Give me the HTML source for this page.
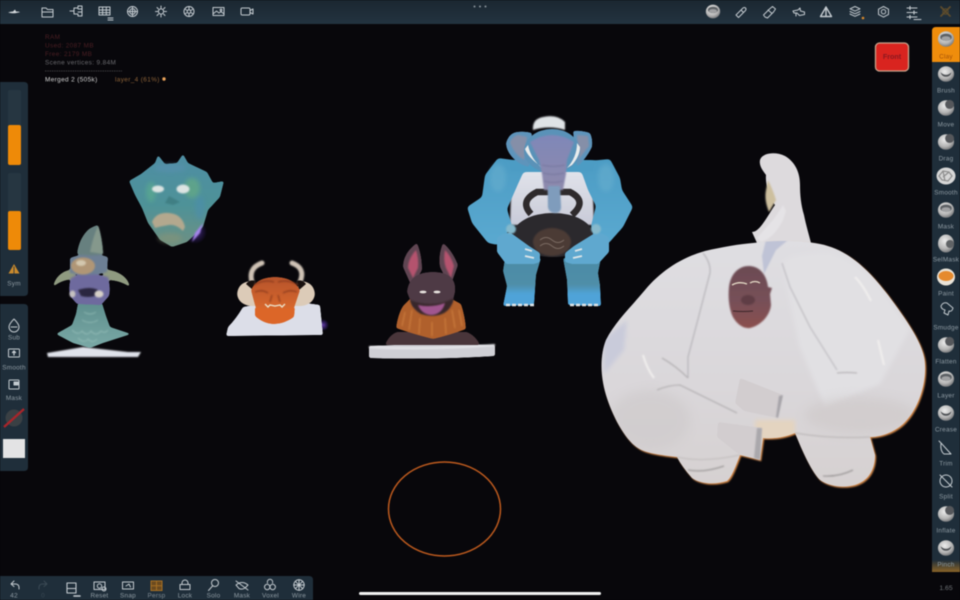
<!DOCTYPE html>
<html><head><meta charset="utf-8"><style>
html,body{margin:0;padding:0;background:#08070b;width:960px;height:600px;overflow:hidden}
svg{display:block;filter:blur(.4px)}
text{font-family:"Liberation Sans",sans-serif}
.l{font-size:6.4px;fill:#8f9ba3;text-anchor:middle;letter-spacing:.25px}
.i{fill:none;stroke:#c3cacf;stroke-width:1;stroke-linejoin:round;stroke-linecap:round}
</style></head><body>
<svg width="960" height="600" viewBox="0 0 960 600" xmlns="http://www.w3.org/2000/svg">
<defs>
<filter id="r1" filterUnits="userSpaceOnUse" x="0" y="0" width="960" height="600" color-interpolation-filters="sRGB"><feGaussianBlur stdDeviation="1"/><feComponentTransfer><feFuncA type="linear" slope="9" intercept="-4"/></feComponentTransfer></filter>
<filter id="r2" filterUnits="userSpaceOnUse" x="0" y="0" width="960" height="600" color-interpolation-filters="sRGB"><feGaussianBlur stdDeviation="1.800"/><feComponentTransfer><feFuncA type="linear" slope="9" intercept="-4"/></feComponentTransfer></filter>
<filter id="s1" filterUnits="userSpaceOnUse" x="0" y="0" width="960" height="600"><feGaussianBlur stdDeviation=".7"/></filter>
<filter id="s2" filterUnits="userSpaceOnUse" x="0" y="0" width="960" height="600"><feGaussianBlur stdDeviation="2"/></filter>
<filter id="s4" filterUnits="userSpaceOnUse" x="0" y="0" width="960" height="600"><feGaussianBlur stdDeviation="5"/></filter>
<linearGradient id="top" x1="0" y1="0" x2="0" y2="1"><stop offset="0" stop-color="#1b2731"/><stop offset="1" stop-color="#233340"/></linearGradient>
<linearGradient id="band" x1="0" y1="0" x2="0" y2="1"><stop offset="0" stop-color="#1f2e3a"/><stop offset="1" stop-color="#8a6428"/></linearGradient>
<radialGradient id="sph" cx=".42" cy=".35" r=".75"><stop offset="0" stop-color="#ececec"/><stop offset=".6" stop-color="#b4b4b4"/><stop offset="1" stop-color="#5d5f62"/></radialGradient>
<linearGradient id="body" x1="0" y1="0" x2="0" y2="1"><stop offset="0" stop-color="#dfdee2"/><stop offset=".6" stop-color="#dad7da"/><stop offset="1" stop-color="#d6d1d1"/></linearGradient>
<linearGradient id="blue" x1="0" y1="0" x2="0" y2="1"><stop offset="0" stop-color="#4c9cc4"/><stop offset="1" stop-color="#5aa9d0"/></linearGradient>
<linearGradient id="leg" x1="0" y1="0" x2="0" y2="1"><stop offset="0" stop-color="#4b8ba6"/><stop offset=".55" stop-color="#4f8ea8"/><stop offset=".75" stop-color="#4fa3d8"/><stop offset="1" stop-color="#4fa3d8"/></linearGradient>
<linearGradient id="face" x1="0" y1="0" x2="0" y2="1"><stop offset="0" stop-color="#4f8ea4"/><stop offset=".55" stop-color="#4e9298"/><stop offset="1" stop-color="#6f9082"/></linearGradient>
<linearGradient id="vest" x1="0" y1="0" x2="0" y2="1"><stop offset="0" stop-color="#e4e6ec"/><stop offset="1" stop-color="#c8cad8"/></linearGradient>
<linearGradient id="ape" x1="0" y1="0" x2="0" y2="1"><stop offset="0" stop-color="#6b4a52"/><stop offset=".55" stop-color="#765058"/><stop offset="1" stop-color="#8a504d"/></linearGradient>
<linearGradient id="coll" x1="0" y1="0" x2="0" y2="1"><stop offset="0" stop-color="#5f8f8e"/><stop offset="1" stop-color="#7aa9a6"/></linearGradient>
<linearGradient id="dev" x1="0" y1="0" x2="0" y2="1"><stop offset="0" stop-color="#b6542c"/><stop offset="1" stop-color="#e06c2c"/></linearGradient>
<linearGradient id="trunk" x1="0" y1="0" x2="0" y2="1"><stop offset="0" stop-color="#7f87b8"/><stop offset=".7" stop-color="#8d89ac"/><stop offset="1" stop-color="#7f9cbc"/></linearGradient>
<radialGradient id="glow"><stop offset="0" stop-color="#9a5cff" stop-opacity=".9"/><stop offset="1" stop-color="#6a3cff" stop-opacity="0"/></radialGradient>
<symbol id="s" viewBox="0 0 20 20" overflow="visible"><ellipse cx="10" cy="10" rx="9" ry="8.600" fill="url(#sph)"/><ellipse cx="10" cy="8" rx="6.400" ry="4" fill="#5c6064"/><ellipse cx="10" cy="9.400" rx="5" ry="2.400" fill="#a0a1a3"/></symbol>
<symbol id="d" viewBox="0 0 20 20" overflow="visible"><ellipse cx="10" cy="10" rx="9" ry="8.600" fill="url(#sph)"/><circle cx="14" cy="6" r="5" fill="#55575b"/></symbol>
<symbol id="c" viewBox="0 0 20 20" overflow="visible"><ellipse cx="10" cy="10" rx="9" ry="8.600" fill="url(#sph)"/><path d="M4 8q6 6 12 0q-1 5-6 5t-6-5z" fill="#4d5054"/></symbol>
<path id="bp" d="M753 243C775 240 800 240 820 244C850 250 870 272 888 295C905 318 925 345 925 365C926 385 918 410 903 424C893 433 880 437 870 437L875 455C875 470 868 481 855 485C845 488 830 487 820 480C810 470 800 445 795 433C785 437 775 439 763 438L760 460L740 455C736 465 732 477 727 481C715 485 700 484 692 478C685 470 680 463 677 457C660 455 645 453 638 448C625 440 612 415 606 395C600 375 600 355 606 340C615 322 630 308 645 290C660 272 680 258 705 251C722 247 740 244 753 243Z"/>
<clipPath id="bc"><use href="#bp"/></clipPath>
</defs>

<rect width="960" height="600" fill="#08070b"/>

<!-- top bar -->
<rect width="960" height="24" fill="url(#top)"/>
<path d="M8 12.500q3-1 5-1l2-2 1 2q3 0 4 .7-3 .6-5 1t-7-.7z" fill="#d5dade"/>
<g class="i">
<path d="M42 17V8h4l1.500 1.500H53V17zM42 12h11"/>
<path d="M70 11h4m0-3v6m0-6h4v-2h4v10h-4v-2h-4M78 9h4M78 12h4"/>
<path d="M99 7h11v8H99zM99 10h11M99 12.600h11M102.600 7v8M106.300 7v8M108 18h5M108 20h5"/>
<circle cx="132.500" cy="11.500" r="5"/><circle cx="132.500" cy="11.500" r="2.800"/><path d="M127.500 11.500h10M132.500 6.500v10"/>
<circle cx="161" cy="11.500" r="2.600"/><path d="M161 6v2M161 15v2M155.500 11.500h2M164.500 11.500h2M157 7.500l1.400 1.400M163.600 14.100l1.400 1.400M157 15.500l1.400-1.400M163.600 8.900l1.400-1.400"/>
<circle cx="189" cy="11.500" r="5"/><circle cx="189" cy="11.500" r="1.800"/><path d="M189 6.500v3M189 13.500v3M184.700 9l2.700 1.500M190.600 12.500l2.700 1.500M184.700 14l2.700-1.500M190.600 10.500l2.700-1.500"/>
<path d="M213 7.500h11v8h-11zM213 14l3.500-3 2.500 2 2-1.500 3 2.500"/><circle cx="221" cy="10" r=".9"/>
<rect x="241" y="8" width="9" height="7" rx="1.200"/><path d="M250 10.500l3-1.500v5l-3-1.500"/>
</g>
<circle cx="474.500" cy="6.500" r="1" fill="#8a949b"/><circle cx="480" cy="6.500" r="1" fill="#8a949b"/><circle cx="485.500" cy="6.500" r="1" fill="#8a949b"/>
<use href="#s" x="704" y="3.500" width="18" height="16"/>
<g class="i">
<path d="M737 16l-1-1 7-7q1.500-1 2.500 0t0 2.500l-7 7zM741 10l2.500 2.500"/>
<path d="M765 17l-1.500-2 6-6 3-2.500 3 2.500-2 3-6 6zM768 10l3.500 3"/>
<path d="M793 11l5-1 2-2 .5 3 4 1v2.500l-5 1-2.500-2.500h-3zM796 13v3"/>
<path d="M826 7l5.500 9.500h-11zM826 7v9.500" stroke-width="1.400"/>
<path d="M855 6.500l5 2.300-5 2.300-5-2.300zM850 11.500l5 2.300 5-2.300M850 14l5 2.300 5-2.300"/>
<path d="M883.500 6.500l5 2.700v5.200l-5 2.700-5-2.700V9.200z"/><circle cx="883.500" cy="11.700" r="2.200"/>
<path d="M907 8h10M907 12.500h10M907 17h10M914 19.500h7" /><path d="M910 6.500v3M914 11v3M910 15.500v3" stroke-width="1.200"/>
</g>
<circle cx="863" cy="18" r="1.300" fill="#d98a2c"/>
<g fill="none" stroke="#5d4c2c" stroke-width="1.800" stroke-linecap="round"><path d="M941 7l9 9M950 7l-9 9"/><circle cx="945.500" cy="11.500" r="2.800" stroke-width="1"/></g>

<!-- stats -->
<g font-size="6.400" letter-spacing=".38">
<text x="45" y="39" fill="#4b1f24">RAM</text>
<text x="45" y="47.500" fill="#4b1f24">Used: 2087 MB</text>
<text x="45" y="56" fill="#4b1f24">Free: 2179 MB</text>
<text x="45" y="64.500" fill="#6b6b6f">Scene vertices: 9.84M</text>
<path d="M45 71h77" stroke="#4d4d50" stroke-width=".7" stroke-dasharray="1.500 .8"/>
<text x="45" y="81.500" fill="#d6d6d6">Merged 2 (505k)</text>
<text x="115" y="81.500" fill="#8c6238">layer_4 (61%)</text>
</g>
<circle cx="164" cy="79" r="1.700" fill="#e9a25a"/>

<!-- Front button -->
<rect x="875.500" y="43" width="33" height="28" rx="4" fill="#d9241f" stroke="#c9a48c" stroke-width="1.300"/>
<text x="892" y="59" font-size="7.200" font-weight="bold" fill="#8b1820" text-anchor="middle">Front</text>

<!-- left panel 1 -->
<path d="M0 82h24q4 0 4 4v206q0 4-4 4H0z" fill="#1f2e3a"/>
<rect x="8" y="90" width="13" height="75" rx="2" fill="#263641"/>
<rect x="8" y="125" width="13" height="40" rx="2" fill="#ee8a08"/>
<rect x="8" y="173" width="13" height="77" rx="2" fill="#263641"/>
<rect x="8" y="211" width="13" height="39" rx="2" fill="#ee8a08"/>
<path d="M14 264l5.500 9.500h-11z" fill="#c98a2d"/><path d="M14 266.500v7" stroke="#1f2e3a" stroke-width=".8"/>
<text class="l" x="14" y="285.500">Sym</text>

<!-- left panel 2 -->
<path d="M0 304h24q4 0 4 4v159q0 4-4 4H0z" fill="#1f2e3a"/>
<g class="i">
<path d="M14 319q5 5 5 8a5 5 0 0 1-10 0q0-3 5-8zM11 327h6"/>
<rect x="8.500" y="349" width="11" height="8" rx=".8"/><path d="M14 355v-4M12.500 352.500l1.500-1.500 1.500 1.500" stroke-width="1.300"/>
<rect x="9" y="380" width="10" height="9" rx=".8"/><path d="M14 382h4v3h-4z" fill="#c3cacf"/>
</g>
<text class="l" x="14" y="339.500">Sub</text>
<text class="l" x="14" y="369.500">Smooth</text>
<text class="l" x="14" y="400">Mask</text>
<circle cx="14" cy="418" r="8.500" fill="#3a4044"/>
<path d="M4 427L24 409" stroke="#a8252a" stroke-width="2.300"/>
<rect x="3" y="439" width="22" height="19" fill="#e3e3e4"/>

<!-- bottom bar -->
<path d="M0 576h309q4 0 4 4v20H0z" fill="#1f2e3a"/>
<g class="i">
<path d="M11 584l3-3m-3 3l3 2.500m-3-2.500h5q3 .5 3 3.500v1.500"/>
<path d="M47 584l-3-3m3 3l-3 2.500m3-2.500h-5q-3 .5-3 3.500v1.500" stroke="#3a4954"/>
<path d="M67 583h9v10h-9zM67 588.500h9" stroke-width="1.100"/><path d="M74 596h6" stroke-width="1.600"/>
<path d="M94 582h11v7.500H94z"/><circle cx="99.500" cy="586" r="2.200"/><circle cx="104" cy="589" r="2"/>
<path d="M122.500 582h11v7h-11zM126 586l3-2 1.500 3"/>
<path d="M180 584.500h10v5h-10zM182 584.500v-1.500a3 3 0 0 1 6 0v1.500"/>
<circle cx="215" cy="583" r="3.500"/><path d="M212.500 586l-4 4.500"/>
<path d="M236 585q6-5 12 0l-3 3q-3 2-6 .5zM236 581l12 9"/>
<path d="M267.500 583a2.700 2.700 0 1 1 5 0M264.500 587a2.700 2.700 0 1 1 2.700 2.700 2.700 2.700 0 0 1-2.700-2.700zM270 587a2.700 2.700 0 1 1 2.700 2.700 2.700 2.700 0 0 1-2.700-2.700z"/>
<circle cx="299" cy="585" r="5.200"/><path d="M293.800 585h10.400M299 579.800v10.400M295.300 581.300l7.400 7.400M302.700 581.300l-7.400 7.400"/>
</g>
<path d="M151 581h11v9.500h-11zM156.500 581v9.500M151 585.800h11" fill="#6b4a1f" stroke="#a56f24" stroke-width="1"/>
<text class="l" x="14" y="597.500" style="font-size:6.600px">42</text>
<text class="l" x="43" y="597.500" style="fill:#3a4954">0</text>
<text class="l" x="99.500" y="597.500">Reset</text>
<text class="l" x="128" y="597.500">Snap</text>
<text class="l" x="156.500" y="597.500" style="fill:#7c8890">Persp</text>
<text class="l" x="185" y="597.500">Lock</text>
<text class="l" x="213.500" y="597.500">Solo</text>
<text class="l" x="242" y="597.500">Mask</text>
<text class="l" x="270.500" y="597.500">Voxel</text>
<text class="l" x="299" y="597.500">Wire</text>
<rect x="359" y="592" width="242" height="3" rx="1.500" fill="#f2f2f2"/>
<text x="946" y="590" font-size="6.800" fill="#6e7276" text-anchor="middle">1.65</text>

<!-- right panel -->
<path d="M936 27H960V572H932V31q0-4 4-4z" fill="#1f2e3a"/>
<rect x="932" y="560" width="28" height="12" fill="url(#band)"/>
<path d="M936 27H960V62H932V31q0-4 4-4z" fill="#ef8d0c"/>
<use href="#s" x="937" y="30" width="18" height="18"/>
<use href="#c" x="937" y="65" width="18" height="18"/>
<use href="#d" x="937" y="99" width="18" height="18"/>
<use href="#d" x="937" y="133" width="18" height="18"/>
<ellipse cx="946" cy="176" rx="9.500" ry="8.500" fill="#d6d6d6"/><path d="M939 176l4-5 6 1 3 4-4 5-6-1zM943 171l2 10M949 172l-6 5" fill="none" stroke="#8d8d8d" stroke-width="1.200"/>
<use href="#s" x="937" y="201" width="18" height="18"/>
<ellipse cx="946" cy="243.500" rx="8" ry="9" fill="url(#sph)"/><circle cx="950" cy="244" r="4" fill="#606366"/>
<ellipse cx="946" cy="277" rx="9" ry="8.500" fill="#e9e3d8"/><ellipse cx="946" cy="276" rx="7.500" ry="5" fill="#e58a2e"/>
<path class="i" d="M941 306q2-4 6-3l6 5q-1 4-4 3l-1 4-4-2 1-3q-4-1-4-4z"/>
<use href="#d" x="937" y="336" width="18" height="18"/>
<use href="#s" x="937" y="370" width="18" height="18"/>
<use href="#c" x="937" y="404" width="18" height="18"/>
<path class="i" d="M941 443l10 11h-7q-4-3-3-11zM939 441l3 3"/>
<g class="i"><circle cx="946" cy="481" r="6"/><path d="M940 475l12 12"/></g>
<use href="#d" x="937" y="505" width="18" height="18"/>
<use href="#c" x="937" y="539" width="18" height="18"/>
<text class="l" x="946" y="58.500" style="fill:#a5520a">Clay</text>
<text class="l" x="946" y="92.500">Brush</text>
<text class="l" x="946" y="126.500">Move</text>
<text class="l" x="946" y="160.500">Drag</text>
<text class="l" x="946" y="194.500">Smooth</text>
<text class="l" x="946" y="228.500">Mask</text>
<text class="l" x="946" y="261.500">SelMask</text>
<text class="l" x="946" y="295.500">Paint</text>
<text class="l" x="946" y="329.500">Smudge</text>
<text class="l" x="946" y="363.500">Flatten</text>
<text class="l" x="946" y="397.500">Layer</text>
<text class="l" x="946" y="431.500">Crease</text>
<text class="l" x="946" y="465.500">Trim</text>
<text class="l" x="946" y="498.500">Split</text>
<text class="l" x="946" y="532.500">Inflate</text>
<text class="l" x="946" y="566.500">Pinch</text>

<!-- orange ring -->
<ellipse cx="444.500" cy="509" rx="56" ry="47" fill="none" stroke="#bd5a1e" stroke-width="1.500"/>

<!-- gargoyle -->
<path d="M47 353l36-6 45 5 13 0-3 5H48z" fill="#dfe2ea" filter="url(#s1)"/>
<g filter="url(#r1)">
<path d="M78 303h24l4 13 4 11 21 7-28 9-13 5-17-5-17-9 16-9 4-11z" fill="url(#coll)"/>
</g>
<g filter="url(#s1)" fill="none" stroke="#9cc4bd" stroke-width="1" opacity=".7">
<path d="M72 330q6 6 10 1 5 6 9 0 5 6 10 0 4 3 7-1M78 338q6 6 10 1 5 5 9 0M84 312q6 4 12 0M82 320q8 5 16 0"/>
</g>
<g filter="url(#r1)">
<path d="M53 287q3-15 20-18l3 10q-14 0-23 8z" fill="#8f9a80"/>
<path d="M130 287q-3-15-26-18l-1 11q15-1 27 7z" fill="#8f9a80"/>
<path d="M71 278q12-7 37-1 3 12 1 19l-8 9-24-1-7-8q-2-9 1-18z" fill="#6e6a9e"/>
<path d="M70 258q18-7 38-1l-1 15q-18 5-37 1z" fill="#6d7f94"/>
<path d="M77 254q2-16 12-25 5-3 9-4 4 12 5 29-12 3-26 0z" fill="#67807f"/>
</g>
<path d="M90 252q3-15 8-26 4 12 5 28z" fill="#85988c" filter="url(#s1)"/>
<path d="M78 290q12-4 20 0l-3 6q-7 2-14 0z" fill="#2a2840" filter="url(#s1)"/>
<ellipse cx="72.500" cy="294" rx="3" ry="3.500" fill="#c5c1c0" filter="url(#s1)"/><ellipse cx="99" cy="294" rx="4.500" ry="3.500" fill="#d6d0c8" filter="url(#s1)"/>
<ellipse cx="83" cy="266" rx="12" ry="8.500" fill="#b09676" filter="url(#s1)"/>
<ellipse cx="81" cy="263" rx="5" ry="3" fill="#d3c7ae" filter="url(#s1)"/>

<!-- blue face -->
<circle cx="195" cy="232" r="12" fill="url(#glow)" opacity=".55"/>
<path d="M129 181l12-7 14-11 3-8 7 9 12-1 6-9 5 9 19 9 6 11 11-2-4 16-12 13-5 17-16 15-15 5-12-7-12-17-6-15-7-13z" fill="url(#face)" filter="url(#r1)"/>
<g filter="url(#s2)" opacity=".5">
<ellipse cx="151" cy="192" rx="5" ry="10" fill="#5fb48a"/><ellipse cx="192" cy="188" rx="8" ry="10" fill="#6eb57a"/>
<ellipse cx="170" cy="168" rx="16" ry="4" fill="#5c8fb3"/>
<ellipse cx="200" cy="208" rx="5" ry="12" fill="#4b8cb0"/>
<ellipse cx="170" cy="238" rx="12" ry="5" fill="#8a9476"/>
</g>
<ellipse cx="158" cy="189" rx="6" ry="3.500" fill="#dce4e2" filter="url(#s1)"/><ellipse cx="183" cy="189" rx="6.500" ry="4.500" fill="#dce4e2" filter="url(#s1)"/>
<path d="M152 222q4-10 17-9t16 14l-2 4q-7-7-14-6t-14 3z" fill="#b3a88e" filter="url(#s1)"/>
<path d="M169 196l-4 7 8 2 7-3z" fill="#3f7f84" filter="url(#s1)"/>
<path d="M195 233l8-10-3 10-8 9z" fill="#a384ea" filter="url(#s1)"/>

<!-- orange devil -->
<circle cx="323" cy="325" r="6" fill="url(#glow)" opacity=".7"/>
<path d="M243 307q40-8 77-2l3 30-97 1 2-9q8-8 15-20z" fill="#dcdee8" filter="url(#r1)"/>
<g filter="url(#r2)">
<path d="M237 294q1-12 14-13l14 25-15 0q-12-2-13-12z" fill="#dccbb8"/>
<path d="M315 294q-1-12-14-13l-14 25 15 0q12-2 13-12z" fill="#dccbb8"/>
</g>
<g fill="none" stroke="#cfc3b6" stroke-linecap="round" filter="url(#s1)">
<path d="M262 263Q248 268 252 282" stroke-width="5"/>
<path d="M292 263Q306 268 300 282" stroke-width="5"/>
</g>
<path d="M246 284q4-5 9-3l-2 9zM306 284q-4-5-9-3l2 9z" fill="#18100e"/>
<path d="M251 290q6-13 24-13t25 13l-5 15-4 12-32 0-4-12z" fill="url(#dev)" filter="url(#r1)"/>
<path d="M255 307q20 4 40 0l-1 10q-10 7-20 7t-19-8z" fill="#dc6628" filter="url(#r1)"/>
<path d="M265 304l3 3 2-2 5 1 5-1 2 2 3-3" stroke="#eadfc8" stroke-width="1.400" fill="none"/>
<g filter="url(#s1)" fill="none" stroke="#8c3a1c" stroke-width="1.200"><path d="M255 292q7-3 13 1M283 293q7-4 14-1M254 285q10-6 20-3M278 282q10-3 20 3M272 295l-2 7M278 295l2 7"/></g>

<!-- rabbit -->
<path d="M369 346q62-3 126-1v11q-60 4-126 2z" fill="#cfcfd5" filter="url(#r1)"/>
<path d="M369 347q62 3 126-2" stroke="#e6e6ea" stroke-width="2" fill="none" filter="url(#s1)"/>
<path d="M385 345q4-10 12-13h70q9 4 13 13z" fill="#49353a" filter="url(#r1)"/>
<g filter="url(#r1)">
<path d="M417 243q-14 10-14 24l9 20 10-17q0-15-5-27z" fill="#5f4552"/>
<path d="M443 243q-5 12-3 24l10 20 8-22q-6-15-15-22z" fill="#5f4552"/>
</g>
<path d="M416 250q-8 9-8 18l5 10 5-10q1-9-2-18z" fill="#b4526e" filter="url(#s1)"/>
<path d="M445 250q-2 10 1 18l5 10 3-12q-3-10-9-16z" fill="#b4526e" filter="url(#s1)"/>
<path d="M396 328q2-14 7-22l9-9h36l13 7q4 12 5 25-16 6-33 10-20-5-37-11z" fill="#b0602c" filter="url(#r1)"/>
<g filter="url(#s1)" stroke="#d0803f" stroke-width="1" fill="none"><path d="M405 312l-3 14M412 310l-3 20M420 318l-1 16M445 318l1 16M452 310l3 18M459 310l3 16M432 322v14"/></g>
<path d="M407 292q2-20 26-20t22 20l-3 12-19 8-20-5z" fill="#4e3a45" filter="url(#r1)"/>
<path d="M410 300q24 9 44-2-3 14-15 17-9 2-18-1-9-5-11-14z" fill="#38282c" filter="url(#s1)"/>
<path d="M418 305q13 3 27-2-3 11-13 12-10 0-14-10z" fill="#a0578f" filter="url(#s1)"/>
<ellipse cx="423" cy="292" rx="3.500" ry="1.400" fill="#e8e4df"/><ellipse cx="437" cy="292" rx="3.500" ry="1.400" fill="#e8e4df"/>

<!-- elephant -->
<g filter="url(#r1)">
<path d="M505 258h36l-5 17-2 30-31 1 4-20-4-15z" fill="url(#leg)"/>
<path d="M563 258h38l-3 15 2 12 1 21-33-1-1-25z" fill="url(#leg)"/>
</g>
<path d="M506 305h28M570 305h29" stroke="#dfe5e8" stroke-width="2.500" stroke-dasharray="4 2"/>
<path d="M512 165h80l2 60H510z" fill="url(#vest)" filter="url(#s1)"/>
<g filter="url(#r2)">
<path d="M498 158L528 162L518 184L507 209L512 226L498 245L488 243L472 223L467 207L482 197L485 175Z" fill="url(#blue)"/>
<path d="M578 162L610 159L620 178L622 190L633 207L623 227L607 245L595 243L591 226L596 206L588 190Z" fill="url(#blue)"/>
<path d="M510 160h84v12h-84z" fill="#4c9cc4"/>
</g>
<ellipse cx="498" cy="178" rx="8" ry="14" fill="#6bb0cf" opacity=".5" filter="url(#s2)"/>
<ellipse cx="606" cy="178" rx="8" ry="14" fill="#6bb0cf" opacity=".5" filter="url(#s2)"/>
<path d="M531 214q-12-13 6-22h33q18 9 2 23" fill="none" stroke="#2e2a2c" stroke-width="6.500"/>
<ellipse cx="553" cy="235" rx="40" ry="22" fill="#2b292d"/>
<ellipse cx="552" cy="242" rx="19" ry="14" fill="#4b3b36" filter="url(#s1)"/>
<path d="M540 240q6-5 12 0t12 0M540 246q6-5 12 0t12 0" fill="none" stroke="#7a6a62" stroke-width="1"/>
<g filter="url(#r1)">
<path d="M497 238q6-6 14-5l18 13 11 7v9l-6 2-28 0-9-12z" fill="#5fa8cf"/>
<path d="M609 238q-6-6-14-5l-21 13-9 7v9l7 2 26 0 11-12z" fill="#5fa8cf"/>
</g>
<ellipse cx="511" cy="229" rx="5" ry="5" fill="#86b9cc" filter="url(#s1)"/><ellipse cx="596" cy="229" rx="5" ry="5" fill="#86b9cc" filter="url(#s1)"/>
<path d="M525 249l7 2M525 256l9 2M582 249l-7 2M582 256l-9 2" stroke="#e0e6e8" stroke-width="1.800"/>
<g filter="url(#r1)">
<path d="M506 143q3-10 11-11 8-1 15 1l-3 34q-10-2-17-10-6-7-6-14z" fill="#5e94bb"/>
<path d="M573 131q8-1 17 2 3 6 2 14-6 12-15 20z" fill="#5e94bb"/>
</g>
<path d="M510 142q3-6 8-7l9 2-3 23q-11-7-14-18z" fill="#858fa8" filter="url(#s1)"/>
<path d="M577 135l11 1 1 10-11 14z" fill="#858fa8" filter="url(#s1)"/>
<ellipse cx="552" cy="151" rx="28" ry="22" fill="#5a92b8"/>
<path d="M533 130q-1-11 10-13 14-3 22 5l0 8q-16-5-32 0z" fill="#dfe3e6" filter="url(#s1)"/>
<path d="M530 142q22-14 44 0l-7 18-1 14-3 16h-4l1 18q-5 4-11 0l-1-18h-4l-2-16-3-14z" fill="url(#trunk)" filter="url(#s1)"/>
<path d="M542 165q11 3 23 0M543 173q10 3 21 0M544 181q9 3 19 0" stroke="#73739a" stroke-width=".8" fill="none" filter="url(#s1)"/>
<path d="M548 186h12l1 21q0 6-6 6t-7-6z" fill="#7f9cbc" filter="url(#s1)"/>
<path d="M528 145q3 14 14 23l-3-3q-11-8-14-16zM577 143q0 14-10 25l5-3q8-9 8-18z" fill="#e9ecec"/>

<!-- white figure -->
<path d="M760 160C762 153 775 151 785 156C795 162 800 172 800 185C800 195 801 205 804 215C806 225 809 235 811 243L775 242C770 245 760 246 757 243L752 232C760 232 768 215 775 205C770 198 765 185 766 175C762 170 759 165 760 160Z" fill="#dddadd"/>
<path d="M768 180q5 10 8 20l-7 12q-5-12-3-22z" fill="#cdbf9e" filter="url(#s1)"/>
<path d="M757 238q8-9 16-18 6-8 10-15l3 6-3 9q-9 18-22 22z" fill="#e5e3e6" filter="url(#s1)"/>
<use href="#bp" fill="#d5894a" transform="translate(1.200 1.200)" filter="url(#s1)"/>
<use href="#bp" fill="url(#body)"/>
<g clip-path="url(#bc)">
<path d="M766 240h22l-12 10-12 24-2-18z" fill="#bfc3d6" filter="url(#s1)"/>
<path d="M603 340l24-20-3 30-20 24z" fill="#c9cbda" filter="url(#s2)"/>
<path d="M782 263q8-10 48-10 30 10 50 34l30 42-30 55-55 23-26-62z" fill="#e1e0e3" filter="url(#s2)"/>
<ellipse cx="650" cy="420" rx="40" ry="30" fill="#cfcbcc" opacity=".7" filter="url(#s4)"/>
<ellipse cx="860" cy="415" rx="55" ry="18" fill="#cdc8c8" opacity=".6" filter="url(#s4)"/>
<path d="M755 420h40v20h-40z" fill="#e4d4c0" filter="url(#s2)"/>
<g fill="none" filter="url(#s1)">
<path d="M703 253q8 10 7 20l-13 50-9 34v21" stroke="#b3b1b6" stroke-width="1.100"/>
<path d="M782 263l8 24 20 40 27 43" stroke="#bcbabf" stroke-width="1.100"/>
<path d="M662 358q14 8 26 20M657 390q12-5 23-5l57 28" stroke="#aeabad" stroke-width="1.100"/>
<path d="M837 373q10-1 20 0" stroke="#aeabad" stroke-width="1"/>
<path d="M643 355q4 14 11 23M855 277q8 8 16 24M878 340l6 25" stroke="#f1efee" stroke-width="2"/>
<path d="M688 470q16 3 36-4M823 476q16 1 30-6" stroke="#8f8c8c" stroke-width="1"/>
<path d="M795 433q35 6 75 4" stroke="#b7b3b3" stroke-width="1"/>
<path d="M677 457q25 6 63-2" stroke="#c0bcbc" stroke-width="1"/>
</g>
</g>
<g filter="url(#r1)">
<path d="M740 378l43 17-5 23-34-7-9-8z" fill="#d2cdcf"/>
<path d="M718 422l44 6-2 32-23-7-20-16z" fill="#d2cdcf"/>
</g>
<path d="M783 395l-5 23-2-1 3-21z" fill="#a5a3a8" filter="url(#s1)"/>
<path d="M762 428l-2 32-6-2 3-30z" fill="#aaa8ac" filter="url(#s1)"/>
<path d="M729 287C731 272 740 266 749 266C760 266 767 276 768 287L772 288L770 294L771 305C770 316 760 326 750 328C742 329 735 322 732 315C729 307 728 297 729 287Z" fill="url(#ape)" filter="url(#s1)"/>
<path d="M732 285q7-4 15-1M750 283q5-3 10 0" fill="none" stroke="#e6dcc8" stroke-width="1.300"/>
<ellipse cx="748" cy="300" rx="7" ry="5" fill="#5e3c44" filter="url(#s1)"/>
<path d="M733 311q10 1 20 0" stroke="#3c2629" stroke-width="1" fill="none"/>
</svg>
</body></html>
